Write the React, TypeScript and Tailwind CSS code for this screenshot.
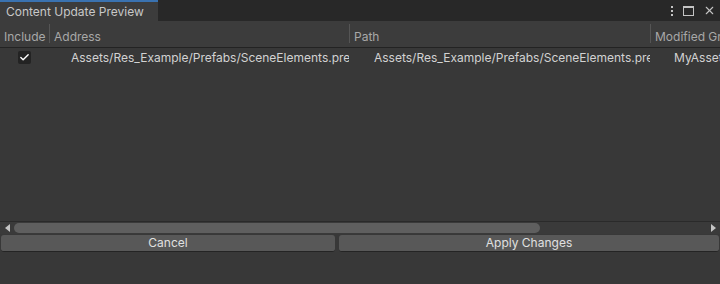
import { Check, X } from 'lucide-react'

const font = { fontFamily: 'Inter, "Noto Sans", sans-serif' }

const columns = [
  { name: 'Include', width: 'w-[49px]' },
  { name: 'Address', width: 'w-[300px]' },
  { name: 'Path', width: 'w-[301px]' },
  { name: 'Modified Group', width: 'flex-1' },
]

export default function App() {
  return (
    <div className="w-[720px] h-[284px] bg-[#383838] flex flex-col overflow-hidden text-[12px] text-[#d2d2d2]" style={font}>
      <div className="h-[21px] bg-[#282828] flex items-stretch shrink-0">
        <div className="w-[158px] bg-[#3c3c3c] border-t-2 border-[#3a72b0] flex items-center pl-[6px] text-[#c8c8c8]">
          Content Update Preview
        </div>
        <div className="flex-1" />
        <div className="flex items-center gap-[9px] pr-[4px] text-[#c4c4c4]">
          <span className="flex flex-col gap-[2px] items-center w-[4px]">
            <span className="w-[2px] h-[2px] bg-[#c4c4c4]" />
            <span className="w-[2px] h-[2px] bg-[#c4c4c4]" />
            <span className="w-[2px] h-[2px] bg-[#c4c4c4]" />
          </span>
          <span className="w-[11px] h-[10px] border border-[#c4c4c4] border-t-2" />
          <X size={13} strokeWidth={2} />
        </div>
      </div>

      <div className="h-[27px] bg-[#3c3c3c] border-b border-[#232323] flex items-stretch shrink-0 text-[#a8a8a8]">
        {columns.map((c, i) => (
          <div key={c.name} className={`${c.width} flex items-start overflow-hidden whitespace-nowrap`}>
            {i > 0 && <span className="w-px h-[19px] mt-[3px] bg-[#555555] shrink-0" />}
            <span className="mt-[8px] leading-[16px] pl-[4px]">{c.name}</span>
          </div>
        ))}
      </div>

      <div className="flex-1 flex flex-col">
        <div className="h-[19px] flex items-center whitespace-nowrap">
          <div className="w-[49px] flex justify-center">
            <span className="w-[13px] h-[13px] rounded-[2px] bg-[#232323] flex items-center justify-center">
              <Check size={11} strokeWidth={3} className="text-white" />
            </span>
          </div>
          <div className="w-[300px] pl-[22px] overflow-hidden">Assets/Res_Example/Prefabs/SceneElements.prefab</div>
          <div className="w-[301px] pl-[25px] overflow-hidden">Assets/Res_Example/Prefabs/SceneElements.prefab</div>
          <div className="flex-1 pl-[24px] overflow-hidden">MyAssetGroup</div>
        </div>
      </div>

      <div className="h-[13px] border-t border-[#2a2a2a] bg-[#3a3a3a] flex items-center shrink-0">
        <div className="w-[14px] flex justify-center">
          <span className="w-0 h-0 border-y-[4px] border-y-transparent border-r-[5px] border-r-[#c4c4c4]" />
        </div>
        <div className="w-[526px] h-[10px] rounded-full bg-[#5f5f5f]" />
        <div className="flex-1" />
        <div className="w-[14px] flex justify-center">
          <span className="w-0 h-0 border-y-[4px] border-y-transparent border-l-[5px] border-l-[#c4c4c4]" />
        </div>
      </div>

      <div className="flex gap-[4px] px-[1px] pt-[1px] h-[50px] shrink-0">
        <button className="w-[334px] h-[17px] rounded-[3px] bg-[#585858] border-b border-[#242424] text-[#e0e0e0] leading-[16px]">Cancel</button>
        <button className="flex-1 h-[17px] rounded-[3px] bg-[#585858] border-b border-[#242424] text-[#e0e0e0] leading-[16px]">Apply Changes</button>
      </div>
    </div>
  )
}
